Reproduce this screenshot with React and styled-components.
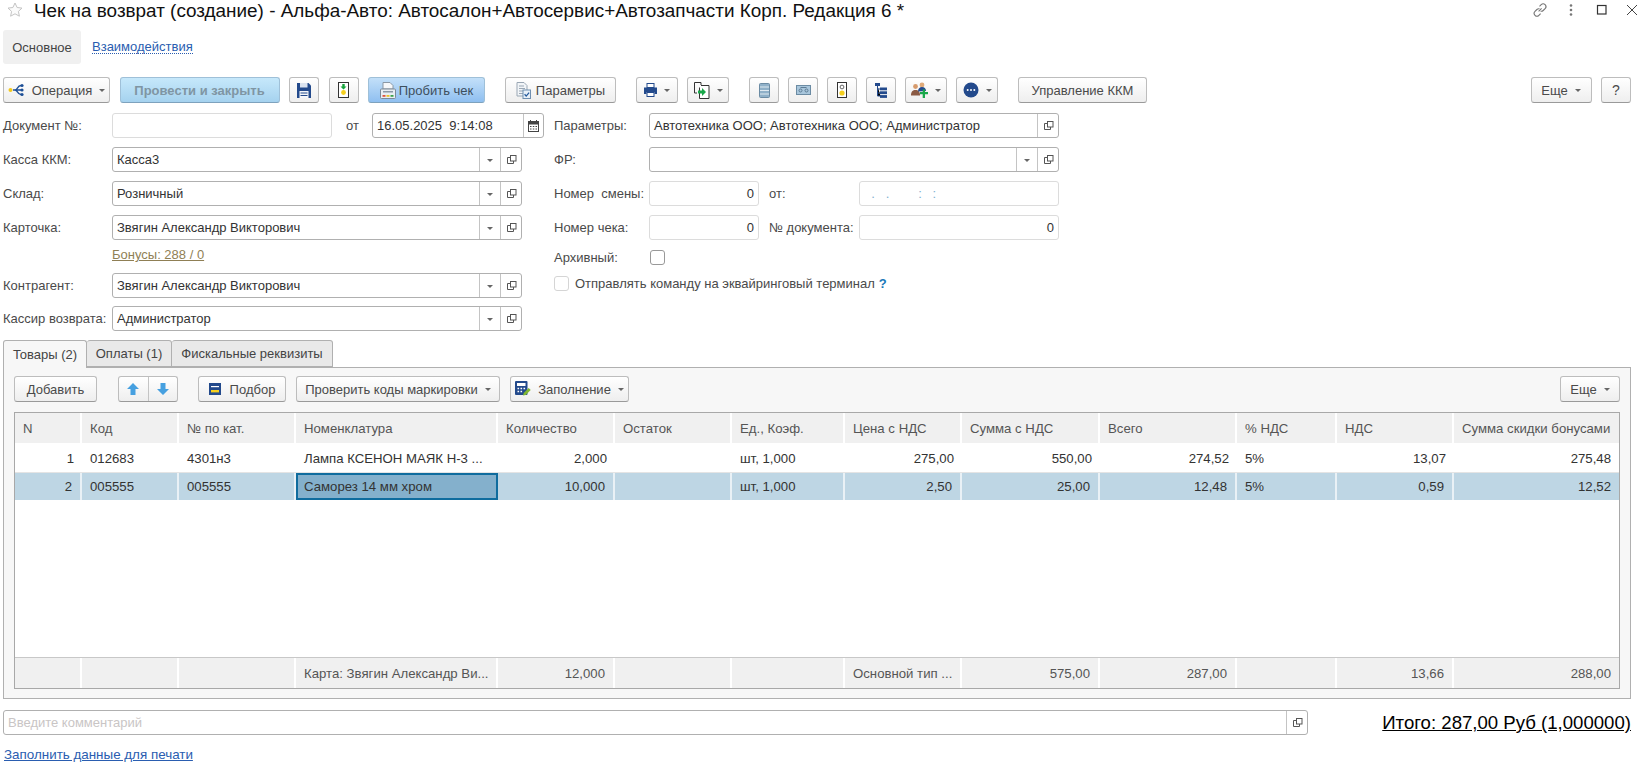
import React from 'react';
import styled, { createGlobalStyle } from 'styled-components';

const Global = createGlobalStyle`
  html, body { margin: 0; padding: 0; background: #fff; overflow: hidden; }
  body { font-family: "Liberation Sans", Arial, sans-serif; font-size: 13px; color: #4a4a4a; }
  * { box-sizing: border-box; }
`;

const Page = styled.div`
  width: 1640px; height: 766px; display: flex; flex-direction: column; padding: 0 9px 0 3px; overflow: hidden;
`;
const TitleBar = styled.div`
  height: 30px; display: flex; align-items: flex-start; padding: 2px 0 0 4px; margin-right: -9px;
`;
const Title = styled.h1`
  margin: -1px 0 0 11px; font-size: 18.9px; font-weight: 400; color: #111; line-height: 20px; white-space: pre;
`;
const WinIcons = styled.div`
  margin-left: auto; display: flex; gap: 15px; padding: 0 1px 0 0; align-items: center; height: 16px;
`;
const Sections = styled.div`
  height: 34px; display: flex; align-items: center; gap: 11px;
`;
const SectionActive = styled.div`
  width: 78px; height: 34px; background: #f0f0f0; border-radius: 3px; display: flex; align-items: center; justify-content: center; font-size: 13px; color: #444;
`;
const SectionLink = styled.a`
  font-size: 13px; color: #2a5db0; border-bottom: 1px dotted #2a5db0; line-height: 13px;
`;
const Toolbar = styled.div`
  margin-top: 13px; height: 26px; display: flex; gap: 20px; flex: none;
`;
const Group = styled.div`
  display: flex; gap: ${p => p.$gap ?? 9.5}px; margin-left: ${p => (p.$right ? 'auto' : '0')};
`;
const Button = styled.button`
  width: ${p => p.$w}px; height: ${p => p.$h || 26}px; padding: 0; display: flex; align-items: center; justify-content: center; gap: ${p => p.$gap ?? 7}px;
  font: ${p => (p.$bold ? 700 : 400)} ${p => p.$fs || 13}px "Liberation Sans", Arial, sans-serif;
  color: ${p => (p.$variant === 'disabled' ? '#7f95a3' : p.$variant === 'blue' ? '#3d4f5e' : '#4a4a4a')};
  border: 1px solid ${p => (p.$variant ? '#9fc0d8' : '#bdbdbd')};
  border-bottom-color: ${p => (p.$variant ? '#7ea2bd' : '#9a9a9a')};
  border-radius: 3px;
  background: ${p => p.$variant === 'disabled' ? 'linear-gradient(#c6e8fb,#a5d2ef)' : p.$variant === 'blue' ? 'linear-gradient(#c3e0f9,#8fbff0)' : 'linear-gradient(#ffffff,#eeeeee)'};
`;
const Caret = styled.span`
  width: 0; height: 0; border-left: 3px solid transparent; border-right: 3px solid transparent; border-top: 3px solid #666; flex: none; margin-top: 1px;
`;
const Form = styled.div`
  margin-top: 10px; display: flex; flex: none;
`;
const Col = styled.div`
  display: flex; flex-direction: column; width: ${p => p.$w}px; margin-left: ${p => p.$ml || 0}px;
`;
const Row = styled.div`
  display: flex; align-items: center; height: 25px; margin-bottom: ${p => p.$mb ?? 9}px; flex: none;
`;
const Label = styled.label`
  width: ${p => p.$w || 109}px; flex: none; color: #4a4a4a; font-size: 13px; white-space: pre; padding-bottom: 1px;
`;
const Field = styled.div`
  width: ${p => p.$w}px; height: ${p => p.$h || 25}px; flex: ${p => p.$w ? 'none' : 1}; border: 1px solid ${p => p.$soft ? '#dcdcdc' : '#b0b0b0'}; border-radius: 3px; background: #fff; display: flex; align-items: stretch; color: #333; font-size: 13px;
`;
const Value = styled.div`
  flex: 1; display: flex; align-items: center; padding: 0 4px; white-space: pre; overflow: hidden;
  justify-content: ${p => p.$right ? 'flex-end' : 'flex-start'};
  color: ${p => p.$ph ? '#c9c5c5' : p.$dim ? '#7fb0d0' : '#333'};
`;
const FieldBtn = styled.div`
  width: ${p => p.$w || 21}px; flex: none; border-left: 1px solid #c4c4c4; display: flex; align-items: center; justify-content: center;
`;
const Bonus = styled.a`
  display: block; height: 33px; margin: -9px 0 0 109px; padding-top: 7px; font-size: 13px; color: #8f7f55; text-decoration: underline;
`;
const InlineLabel = styled.span`
  width: ${p => p.$w}px; flex: none; margin-left: ${p => p.$ml || 0}px; color: #4a4a4a; font-size: 13px; white-space: pre; padding-bottom: 1px;
`;
const CheckBox = styled.span`
  width: 15px; height: 15px; flex: none; border: 1px solid ${p => p.$soft ? '#d5d5d5' : '#999'}; border-radius: 3px; background: #fff; display: block;
`;
const CheckRow = styled.div`
  height: 15px; display: flex; align-items: center; margin-top: ${p => p.$mt || 0}px; font-size: 13px; color: #4a4a4a; flex: none;
`;
const Help = styled.span`
  color: #1a78b8; font-weight: 700; margin-left: 4px;
`;
const Tabs = styled.div`
  display: flex; margin-top: 9px; height: 28px; flex: none; position: relative; z-index: 1;
`;
const Tab = styled.div`
  width: ${p => p.$w}px; height: ${p => p.$active ? 28 : 27}px; border: 1px solid #b0b0b0; border-left-width: ${p => p.$first ? 1 : 0}px; border-bottom: ${p => p.$active ? 'none' : '1px solid #b0b0b0'};
  border-radius: 3px 3px 0 0; background: ${p => p.$active ? '#f7f7f7' : '#e9e9e9'}; display: flex; align-items: center; justify-content: center; color: #444; font-size: 13px;
`;
const Panel = styled.div`
  height: 332px; margin-top: -1px; flex: none; border: 1px solid #b0b0b0; background: #f7f7f7; padding: 8px 10px 9px 10px; display: flex; flex-direction: column;
`;
const PanelBar = styled.div`
  display: flex; gap: 10px; height: 26px; flex: none;
`;
const Split = styled.div`
  display: flex; margin: 0 10px 0 11px; width: 60px; height: 26px; border: 1px solid #bdbdbd; border-bottom-color: #9a9a9a; border-radius: 3px; background: linear-gradient(#fff,#eee);
`;
const SplitPart = styled.div`
  flex: 1; display: flex; align-items: center; justify-content: center; & + & { border-left: 1px solid #c4c4c4; }
`;
const Table = styled.div`
  margin-top: 10px; flex: 1; border: 1px solid #a8a8a8; background: #fff; display: flex; flex-direction: column; min-height: 0;
`;
const GridRow = styled.div`
  display: grid; flex: none; height: ${p => p.$h}px;
  grid-template-columns: 67px 97px 117px 202px 117px 117px 113px 117px 138px 137px 100px 117px 1fr;
  background: ${p => p.$bg || 'transparent'};
  border-top: ${p => p.$bt ? `1px solid ${p.$bt}` : 'none'};
  border-bottom: ${p => p.$bb ? `1px solid ${p.$bb}` : 'none'};
`;
const Filler = styled.div`
  flex: 1;
`;
const Cell = styled.div`
  display: flex; align-items: center; padding: 0 8px; font-size: 13.2px; white-space: pre; overflow: hidden; min-width: 0;
  justify-content: ${p => p.$right ? 'flex-end' : 'flex-start'};
  color: ${p => p.$muted ? '#555' : '#333'};
  border-right: ${p => p.$line ? `2px solid ${p.$line}` : 'none'};
  ${p => p.$focus ? 'background:#84b0cc;border:2px solid #0f6c9e;padding:0 6px;' : ''}
`;
const Bottom = styled.div`
  margin-top: 11px; display: flex; align-items: flex-start; height: 26px; flex: none;
`;
const Total = styled.a`
  margin-left: auto; font-size: 18.6px; color: #000; text-decoration: underline; line-height: 26px; white-space: pre;
`;
const PrintLink = styled.a`
  margin: 11px 0 0 1px; font-size: 13.4px; color: #2a5db0; text-decoration: underline; flex: none; align-self: flex-start;
`;

const Copy = () => (
  <svg width="11" height="11" viewBox="0 0 11 11" fill="none" stroke="#555" strokeWidth="1">
    <rect x="4.5" y="1.5" width="5.5" height="5.5" />
    <path d="M4.5 3.5H1.5V9.5H7.5V7" />
  </svg>
);
const Tri = () => <Caret />;
const Star = () => (
  <svg width="16" height="15" viewBox="0 0 16 15" fill="#fbfbfb" stroke="#c4c4c4" strokeWidth="1">
    <path d="M8 1l2.1 4.5 4.9.6-3.6 3.3 1 4.8L8 11.8 3.6 14.2l1-4.8L1 6.1l4.9-.6z" />
  </svg>
);
const LinkIc = () => (
  <svg width="16" height="16" viewBox="0 0 16 16" fill="none" stroke="#777" strokeWidth="1.1">
    <path d="M6.6 9.4l3-3M7.5 4.4l1.7-1.7a2.7 2.7 0 0 1 3.9 3.9l-1.9 1.9a2.7 2.7 0 0 1-2.6.7" />
    <path d="M8.6 11.6l-1.7 1.7a2.7 2.7 0 0 1-3.9-3.9l1.9-1.9a2.7 2.7 0 0 1 2.6-.7" />
  </svg>
);
const Dots = () => (
  <svg width="16" height="14" viewBox="0 0 16 14" fill="#777"><circle cx="8" cy="2.5" r="1.3" /><circle cx="8" cy="7" r="1.3" /><circle cx="8" cy="11.5" r="1.3" /></svg>
);
const Maximize = () => (
  <svg width="16" height="14" viewBox="0 0 16 14" fill="none" stroke="#333" strokeWidth="1.2"><rect x="3.5" y="2.5" width="8.5" height="8.5" /></svg>
);
const Close = () => (
  <svg width="14" height="14" viewBox="0 0 14 14" fill="none" stroke="#444" strokeWidth="1"><path d="M2 2l10 10M12 2L2 12" /></svg>
);
const OpIc = () => (
  <svg width="17" height="14" viewBox="0 0 17 14">
    <circle cx="2.5" cy="7" r="2" fill="#f2c81e" /><path d="M5 7h8M13 2.5C9 2.5 10 7 7 7c3 0 2 4.5 6 4.5" fill="none" stroke="#1d4f96" strokeWidth="1.5" />
    <circle cx="14" cy="2.5" r="1.6" fill="#1d4f96" /><circle cx="14" cy="7" r="1.6" fill="#1d4f96" /><circle cx="14" cy="11.5" r="1.6" fill="#1d4f96" />
  </svg>
);
const Save = () => (
  <svg width="14" height="15" viewBox="0 0 14 15"><path d="M0 0h11.5L14 2.5V15H0z" fill="#234a8c" /><rect x="3" y="0" width="7.5" height="4.5" fill="#dbe3ef" /><rect x="2.5" y="8" width="9" height="7" fill="#f4f6fa" /><path d="M3.5 10h7M3.5 12.5h7" stroke="#234a8c" /></svg>
);
const Signal = () => (
  <svg width="11" height="16" viewBox="0 0 11 16"><rect x=".5" y=".5" width="10" height="15" fill="#fff" stroke="#333" /><path d="M4.3 2h2.4v2.5H8.5L5.5 7.5 2.5 4.5h1.8z" fill="#15a33a" /><circle cx="5.5" cy="10.5" r="2.4" fill="#f5cf1d" /></svg>
);
const Receipt = () => (
  <svg width="16" height="17" viewBox="0 0 16 17"><path d="M3 .5h7l3 3V7H3z" fill="#f6f8fa" stroke="#8b98a5" /><rect x=".5" y="7" width="15" height="9.5" rx="1" fill="#e9eef3" stroke="#7d8a97" /><rect x="3" y="9" width="10" height="1.5" fill="#8b98a5" /><rect x="2.5" y="13" width="3" height="1.8" fill="#e0533d" /><rect x="6.5" y="13" width="3" height="1.8" fill="#e8c22a" /><rect x="10.5" y="13" width="3" height="1.8" fill="#3fa34d" /></svg>
);
const Params = () => (
  <svg width="15" height="17" viewBox="0 0 15 17"><path d="M1 .5h7l3 3V14H1z" fill="#f2f5f8" stroke="#9aa7b4" /><path d="M3 4h5M3 6.5h6M3 9h6M3 11.5h4" stroke="#9aa7b4" /><rect x="7" y="8" width="7.5" height="8.5" fill="#e8f0f8" stroke="#6f8fb0" /><path d="M8.6 12.3l1.6 1.8 2.9-3.5" fill="none" stroke="#245a9c" strokeWidth="1.3" /></svg>
);
const Printer = () => (
  <svg width="13" height="14" viewBox="0 0 13 14"><rect x="3" y=".5" width="7" height="4" fill="#fff" stroke="#234a8c" /><path d="M0 4.5h13v6.5h-2.5V9h-8v2H0z" fill="#234a8c" /><rect x="3" y="9.5" width="7" height="4" fill="#fff" stroke="#234a8c" /></svg>
);
const CopyDoc = () => (
  <svg width="16" height="17" viewBox="0 0 16 17" fill="none"><path d="M7 3V.5H.5V11H3" stroke="#333" /><path d="M5.5 5.5V16.5H15V3.5H7" fill="#fff" stroke="#333" /><path d="M4 8.5h4V6l4 4-4 4v-2.5H4z" fill="#19a84a" /></svg>
);
const Stack = () => (
  <svg width="11" height="15" viewBox="0 0 11 15"><rect x=".5" y=".5" width="10" height="14" rx="1" fill="#8fb0c8" stroke="#6b8ba3" /><path d="M1 4h9M1 7.5h9M1 11h9" stroke="#dfe9f0" strokeWidth="1.2" /></svg>
);
const Tape = () => (
  <svg width="15" height="10" viewBox="0 0 15 10" fill="none"><rect x=".5" y=".5" width="14" height="9" fill="#a8c6dc" stroke="#6b8ba3" /><circle cx="4.5" cy="5.5" r="1.5" stroke="#5d7c95" /><circle cx="10.5" cy="5.5" r="1.5" stroke="#5d7c95" /><path d="M4.5 2.5h6" stroke="#5d7c95" /></svg>
);
const Person = () => (
  <svg width="10" height="16" viewBox="0 0 10 16"><rect x=".5" y=".5" width="9" height="15" fill="#fff" stroke="#333" /><circle cx="5" cy="5" r="1.9" fill="none" stroke="#666" /><circle cx="5" cy="11" r="2.6" fill="#f5cf1d" /></svg>
);
const Tree = () => (
  <svg width="12" height="15" viewBox="0 0 12 15"><rect x="0" y="0" width="5" height="3" fill="#234a8c" /><path d="M2.5 3v10h3M2.5 6h3M2.5 10h3" stroke="#234a8c" /><rect x="5" y="4.5" width="7" height="2.8" fill="#234a8c" /><rect x="5" y="8.3" width="7" height="2.8" fill="#234a8c" /><rect x="5" y="12.1" width="7" height="2.8" fill="#234a8c" /></svg>
);
const Users = () => (
  <svg width="17" height="16" viewBox="0 0 17 16"><circle cx="4.5" cy="4.5" r="2.4" fill="#d69a6c" /><path d="M0 13.5c0-4 1.7-5.5 4.5-5.5S9 9.5 9 13.5z" fill="#8a5a44" /><circle cx="11" cy="3" r="2.4" fill="#e0aa7a" /><path d="M7 9.5c0-3 1.7-4.5 4-4.5s4 1.5 4 4z" fill="#234a8c" /><path d="M9 10h2.7V7.5h2.3V10H17v2.3h-3V16h-2.3v-3.7H9z" fill="#19a84a" /></svg>
);
const More = () => (
  <svg width="16" height="16" viewBox="0 0 16 16"><circle cx="8" cy="8" r="7.5" fill="#234a8c" /><circle cx="4.7" cy="8" r="1" fill="#fff" /><circle cx="8" cy="8" r="1" fill="#fff" /><circle cx="11.3" cy="8" r="1" fill="#fff" /></svg>
);
const Arrow = ({ down }) => (
  <svg width="12" height="12" viewBox="0 0 12 12" style={{ transform: down ? 'rotate(180deg)' : 'none' }}><path d="M6 0l6 6H8.5v6h-5V6H0z" fill="#46a0e0" /></svg>
);
const Calc = () => (
  <svg width="12" height="12" viewBox="0 0 12 12"><rect width="12" height="12" fill="#234a8c" /><rect x="2" y="3" width="8" height="1.2" fill="#fff" /><rect x="2" y="7" width="8" height="2.4" fill="#f5cf1d" /></svg>
);
const CalcPen = () => (
  <svg width="16" height="16" viewBox="0 0 16 16"><rect width="12.5" height="14" rx="1" fill="#234a8c" /><rect x="2" y="2" width="8.5" height="3" fill="#fff" /><path d="M2.5 7.5h1.6M5.5 7.5h1.6M8.5 7.5h1.6M2.5 10.5h1.6M5.5 10.5h1.6" stroke="#fff" strokeWidth="1.4" /><path d="M8 14.5l.7-2.6 5-5 2 2-5 5z" fill="#7fb62e" /></svg>
);
const CalIc = () => (
  <svg width="11" height="12" viewBox="0 0 11 12"><rect x=".5" y="1.5" width="10" height="10" fill="#fff" stroke="#444" /><rect x=".5" y="1.5" width="10" height="3" fill="#444" /><path d="M2.5 0v2M8.5 0v2" stroke="#444" /><path d="M2 6.5h1.5M4.8 6.5h1.5M7.5 6.5h1.5M2 9h1.5M4.8 9h1.5M7.5 9h1.5" stroke="#444" /></svg>
);

const Select = ({ w, value }) => (
  <Field $w={w}>
    <Value>{value}</Value>
    <FieldBtn><Tri /></FieldBtn>
    <FieldBtn><Copy /></FieldBtn>
  </Field>
);

const HEAD = ['N', 'Код', '№ по кат.', 'Номенклатура', 'Количество', 'Остаток', 'Ед., Коэф.', 'Цена с НДС', 'Сумма с НДС', 'Всего', '% НДС', 'НДС', 'Сумма скидки бонусами'];
const RIGHT = [true, false, false, false, true, true, false, true, true, true, false, true, true];
const ROWS = [
  ['1', '012683', '4301н3', 'Лампа КСЕНОН МАЯК Н-3 ...', '2,000', '', 'шт, 1,000', '275,00', '550,00', '274,52', '5%', '13,07', '275,48'],
  ['2', '005555', '005555', 'Саморез 14 мм хром', '10,000', '', 'шт, 1,000', '2,50', '25,00', '12,48', '5%', '0,59', '12,52'],
];
const FOOT = ['', '', '', 'Карта: Звягин Александр Ви...', '12,000', '', '', 'Основной тип ...', '575,00', '287,00', '', '13,66', '288,00'];

export default function App() {
  return (
    <>
      <Global />
      <Page>
        <TitleBar>
          <Star />
          <Title>Чек на возврат (создание) - Альфа-Авто: Автосалон+Автосервис+Автозапчасти Корп. Редакция 6 *</Title>
          <WinIcons><LinkIc /><Dots /><Maximize /><Close /></WinIcons>
        </TitleBar>
        <Sections>
          <SectionActive>Основное</SectionActive>
          <SectionLink>Взаимодействия</SectionLink>
        </Sections>
        <Toolbar>
          <Group>
            <Button $w={107}><OpIc />Операция<Tri /></Button>
            <Button $w={160} $variant="disabled" $bold>Провести и закрыть</Button>
            <Button $w={30}><Save /></Button>
            <Button $w={30}><Signal /></Button>
            <Button $w={117} $variant="blue" $gap={3}><Receipt />Пробить чек</Button>
          </Group>
          <Group><Button $w={111} $gap={5}><Params />Параметры</Button></Group>
          <Group $gap={9}>
            <Button $w={42}><Printer /><Tri /></Button>
            <Button $w={42}><CopyDoc /><Tri /></Button>
          </Group>
          <Group $gap={9}>
            <Button $w={30}><Stack /></Button>
            <Button $w={30}><Tape /></Button>
            <Button $w={30}><Person /></Button>
            <Button $w={30}><Tree /></Button>
            <Button $w={42}><Users /><Tri /></Button>
            <Button $w={42}><More /><Tri /></Button>
          </Group>
          <Group><Button $w={129}>Управление ККМ</Button></Group>
          <Group $right>
            <Button $w={61}>Еще<Tri /></Button>
            <Button $w={30} $fs={14}>?</Button>
          </Group>
        </Toolbar>
        <Form>
          <Col $w={541}>
            <Row>
              <Label>Документ №:</Label>
              <Field $w={220} $soft><Value /></Field>
              <InlineLabel $w={26} $ml={14}>от</InlineLabel>
              <Field $w={172}><Value>16.05.2025  9:14:08</Value><FieldBtn $w={20}><CalIc /></FieldBtn></Field>
            </Row>
            <Row><Label>Касса ККМ:</Label><Select w={410} value="Касса3" /></Row>
            <Row><Label>Склад:</Label><Select w={410} value="Розничный" /></Row>
            <Row><Label>Карточка:</Label><Select w={410} value="Звягин Александр Викторович" /></Row>
            <Bonus>Бонусы: 288 / 0</Bonus>
            <Row $mb={8}><Label>Контрагент:</Label><Select w={410} value="Звягин Александр Викторович" /></Row>
            <Row $mb={0}><Label>Кассир возврата:</Label><Select w={410} value="Администратор" /></Row>
          </Col>
          <Col $w={505} $ml={10}>
            <Row>
              <Label $w={95}>Параметры:</Label>
              <Field $w={410}><Value>Автотехника ООО; Автотехника ООО; Администратор</Value><FieldBtn><Copy /></FieldBtn></Field>
            </Row>
            <Row>
              <Label $w={95}>ФР:</Label>
              <Field $w={410}><Value /><FieldBtn><Tri /></FieldBtn><FieldBtn><Copy /></FieldBtn></Field>
            </Row>
            <Row>
              <Label $w={95}>Номер  смены:</Label>
              <Field $w={110} $soft><Value $right>0</Value></Field>
              <InlineLabel $w={90} $ml={10}>от:</InlineLabel>
              <Field $w={200} $soft><Value $dim>{'  .   .        :   :'}</Value></Field>
            </Row>
            <Row>
              <Label $w={95}>Номер чека:</Label>
              <Field $w={110} $soft><Value $right>0</Value></Field>
              <InlineLabel $w={90} $ml={10}>№ документа:</InlineLabel>
              <Field $w={200} $soft><Value $right>0</Value></Field>
            </Row>
            <CheckRow $mt={1}><Label $w={96}>Архивный:</Label><CheckBox /></CheckRow>
            <CheckRow $mt={11}><CheckBox $soft /><InlineLabel $w={320} $ml={6}>Отправлять команду на эквайринговый терминал<Help>?</Help></InlineLabel></CheckRow>
          </Col>
        </Form>
        <Tabs>
          <Tab $w={84} $first $active>Товары (2)</Tab>
          <Tab $w={85}>Оплаты (1)</Tab>
          <Tab $w={161}>Фискальные реквизиты</Tab>
        </Tabs>
        <Panel>
          <PanelBar>
            <Button $w={83}>Добавить</Button>
            <Split>
              <SplitPart><Arrow /></SplitPart>
              <SplitPart><Arrow down /></SplitPart>
            </Split>
            <Button $w={88} $gap={9}><Calc />Подбор</Button>
            <Button $w={204}>Проверить коды маркировки<Tri /></Button>
            <Button $w={119}><CalcPen />Заполнение<Tri /></Button>
            <Group $right><Button $w={60}>Еще<Tri /></Button></Group>
          </PanelBar>
          <Table>
            <GridRow $h={30} $bg="#f0f0f0">
              {HEAD.map((h, i) => <Cell key={h} $muted $line={i < 12 ? '#fff' : null}>{h}</Cell>)}
            </GridRow>
            <GridRow $h={30} $bt="#fff" $bb="#e4e4e4">
              {ROWS[0].map((c, i) => <Cell key={i} $right={RIGHT[i]}>{c}</Cell>)}
            </GridRow>
            <GridRow $h={27} $bg="#bed6e4">
              {ROWS[1].map((c, i) => <Cell key={i} $right={RIGHT[i]} $focus={i === 3} $line={i < 12 && i !== 3 ? '#e9f1f6' : null}>{c}</Cell>)}
            </GridRow>
            <Filler />
            <GridRow $h={31} $bg="#f0f0f0" $bt="#c8c8c8">
              {FOOT.map((c, i) => <Cell key={i} $muted $right={RIGHT[i] && i !== 7} $line={i < 12 ? '#fff' : null}>{c}</Cell>)}
            </GridRow>
          </Table>
        </Panel>
        <Bottom>
          <Field $w={1305}><Value $ph>Введите комментарий</Value><FieldBtn><Copy /></FieldBtn></Field>
          <Total>Итого: 287,00 Руб (1,000000)</Total>
        </Bottom>
        <PrintLink>Заполнить данные для печати</PrintLink>
      </Page>
    </>
  );
}
